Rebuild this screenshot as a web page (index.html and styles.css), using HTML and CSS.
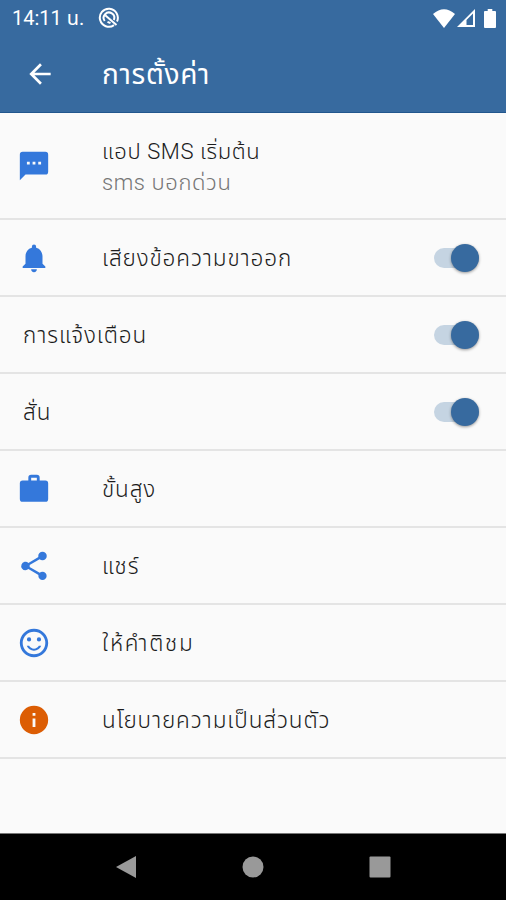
FILE: index.html
```
<!DOCTYPE html>
<html lang="th">
<head>
    <meta charset="UTF-8">
    <meta name="viewport" content="width=device-width, initial-scale=1.0">
    <title>การตั้งค่า</title>
    <link rel="stylesheet" href="styles.css">
</head>
<body>
    <header class="statusbar">
        <span class="clock">14:11 น.</span>
        <svg class="dnd" viewBox="0 0 22 22"><path d="M16 18.1A9 9 0 1 1 19 14.5" fill="none" stroke="#fff" stroke-width="2"/><path d="M6.7 14A5.3 5.3 0 1 1 15.8 13M7.5 8.5l11 9.5M9.5 14.8l3 1.4" fill="none" stroke="#fff" stroke-width="2"/></svg>
        <div class="signals">
            <svg width="22" height="19" viewBox="0 0 22 19"><path d="M0 5Q11-4.5 22 5L11 19z"/></svg>
            <svg width="18" height="18" viewBox="0 0 18 18"><path d="M18 0v18H0zM16 4.5L9.5 11v5H16z" fill-rule="evenodd"/></svg>
            <svg class="battery" width="12" height="19" viewBox="0 0 13 19" preserveAspectRatio="none"><path d="M4 0h5v2h3a1 1 0 0 1 1 1v15a1 1 0 0 1-1 1H1a1 1 0 0 1-1-1V3a1 1 0 0 1 1-1h3z"/></svg>
        </div>
    </header>
    <div class="toolbar">
        <svg class="back" viewBox="0 0 24 24"><path d="M20 11H7.83l5.59-5.59L12 4l-8 8 8 8 1.41-1.41L7.83 13H20z"/></svg>
        <h1>การตั้งค่า</h1>
    </div>
    <main class="settings">
        <div class="row tall">
            <svg class="icon" viewBox="0 0 24 24"><path d="M20 2H4a2 2 0 0 0-2 2v18l4-4h14a2 2 0 0 0 2-2V4a2 2 0 0 0-2-2zM9 11H7V9h2zm4 0h-2V9h2zm4 0h-2V9h2z"/></svg>
            <div class="label"><p>แอป SMS เริ่มต้น</p><p class="summary">sms บอกด่วน</p></div>
        </div>
        <div class="row">
            <svg class="icon" viewBox="0 0 24 24"><path d="M12 22a2 2 0 0 0 2-2h-4a2 2 0 0 0 2 2zm6-6v-5c0-3.07-1.64-5.64-4.5-6.32V4a1.5 1.5 0 0 0-3 0v.68C7.63 5.36 6 7.92 6 11v5l-2 2v1h16v-1z"/></svg>
            <div class="label">เสียงข้อความขาออก</div>
            <span class="switch"></span>
        </div>
        <div class="row plain">
            <div class="label">การแจ้งเตือน</div>
            <span class="switch"></span>
        </div>
        <div class="row plain">
            <div class="label">สั่น</div>
            <span class="switch"></span>
        </div>
        <div class="row">
            <svg class="icon" viewBox="0 0 24 24"><path d="M20 6h-4V4a2 2 0 0 0-2-2h-4a2 2 0 0 0-2 2v2H4a2 2 0 0 0-2 2v11a2 2 0 0 0 2 2h16a2 2 0 0 0 2-2V8a2 2 0 0 0-2-2zm-6 0h-4V4h4z"/></svg>
            <div class="label">ขั้นสูง</div>
        </div>
        <div class="row">
            <svg class="icon" viewBox="0 0 24 24"><path d="M18 16.08c-.76 0-1.44.3-1.96.77L8.91 12.7c.05-.23.09-.46.09-.7s-.04-.47-.09-.7l7.05-4.11c.54.5 1.25.81 2.04.81a3 3 0 1 0-3-3c0 .24.04.47.09.7L8.04 9.81A3 3 0 1 0 6 15c.79 0 1.5-.31 2.04-.81l7.12 4.16c-.05.21-.08.43-.08.65a2.92 2.92 0 1 0 2.92-2.92z"/></svg>
            <div class="label">แชร์</div>
        </div>
        <div class="row">
            <svg class="icon" viewBox="0 0 24 24"><path d="M11.99 2C6.47 2 2 6.48 2 12s4.47 10 9.99 10C17.52 22 22 17.52 22 12S17.52 2 11.99 2zM12 20a8 8 0 1 1 0-16 8 8 0 0 1 0 16zm3.5-9a1.5 1.5 0 1 0 0-3 1.5 1.5 0 0 0 0 3zm-7 0a1.5 1.5 0 1 0 0-3 1.5 1.5 0 0 0 0 3zm3.5 6.5c2.33 0 4.31-1.46 5.11-3.5h-1.68c-.69 1.19-1.97 2-3.43 2s-2.75-.81-3.45-2H6.88c.8 2.04 2.79 3.5 5.12 3.5z"/></svg>
            <div class="label wide">ให้คำติชม</div>
        </div>
        <div class="row">
            <svg class="icon info" viewBox="0 0 24 24"><path d="M12 2a10 10 0 1 0 0 20 10 10 0 0 0 0-20zm1 15h-2v-6h2zm0-8h-2V7h2z"/></svg>
            <div class="label">นโยบายความเป็นส่วนตัว</div>
        </div>
    </main>
    <nav class="navbar">
        <svg viewBox="0 0 24 24"><path d="M22 1v22L2 12z"/></svg>
        <svg viewBox="0 0 24 24"><circle cx="12" cy="12" r="10.5"/></svg>
        <svg viewBox="0 0 24 24"><rect x="1.5" y="1.5" width="21" height="21" rx="1"/></svg>
    </nav>
</body>
</html>
```
FILE: styles.css
```
:root {
    --primary: #376a9f;
    --accent: #3478db;
}
* {
    box-sizing: border-box;
}
body {
    margin: 0;
    height: 900px;
    display: flex;
    flex-direction: column;
    overflow: hidden;
    background: #fafafa;
    color: #1c1c1c;
    font-family: Roboto, "Noto Sans Thai", "Noto Sans", sans-serif;
}
h1, p {
    margin: 0;
}
.statusbar {
    height: 36px;
    padding: 0 10px 0 12px;
    display: flex;
    align-items: center;
    background: var(--primary);
    color: #fff;
    font-size: 20px;
}
.clock {
    padding-top: 2px;
}
.dnd {
    width: 22px;
    height: 22px;
    margin-left: 14px;
}
.signals {
    margin-left: auto;
    display: flex;
    align-items: center;
    gap: 2px;
    fill: #fff;
}
.battery {
    margin-left: 7px;
}
.toolbar {
    height: 77px;
    padding-left: 24px;
    display: flex;
    align-items: center;
    background: var(--primary);
    border-bottom: 1px solid #22568d;
    color: #fff;
}
.back {
    width: 32px;
    height: 32px;
    margin-right: 46px;
    fill: #fff;
}
h1 {
    padding-top: 3px;
    font-size: 28px;
    font-weight: 400;
    letter-spacing: 0.7px;
}
.settings {
    flex: 1;
}
.row {
    height: 77px;
    padding: 0 27px 0 17px;
    display: flex;
    align-items: center;
    border-bottom: 2px solid #e4e4e4;
    font-size: 22.5px;
    font-weight: 300;
    letter-spacing: 0.9px;
}
.tall {
    height: 107px;
    font-size: 22px;
    letter-spacing: 0.6px;
}
.plain {
    padding-left: 23px;
}
.icon {
    width: 34px;
    height: 34px;
    margin-right: 51px;
    fill: var(--accent);
}
.info {
    fill: #dc5d04;
}
.label {
    flex: 1;
    padding-top: 2px;
    line-height: 31px;
}
.wide {
    letter-spacing: 1.7px;
}
.summary {
    color: #757575;
}
.switch {
    width: 45px;
    height: 20px;
    border-radius: 10px;
    background: #c5d4e2;
    position: relative;
}
.switch::after {
    content: "";
    position: absolute;
    right: 0;
    top: -4px;
    width: 28px;
    height: 28px;
    border-radius: 50%;
    background: var(--primary);
    box-shadow: 0 1px 3px rgba(0, 0, 0, 0.4);
}
.navbar {
    height: 67px;
    display: flex;
    align-items: center;
    justify-content: center;
    gap: 103px;
    background: #000;
    border-top: 1px solid #777;
}
.navbar svg {
    width: 24px;
    height: 24px;
    fill: #999;
}
```
